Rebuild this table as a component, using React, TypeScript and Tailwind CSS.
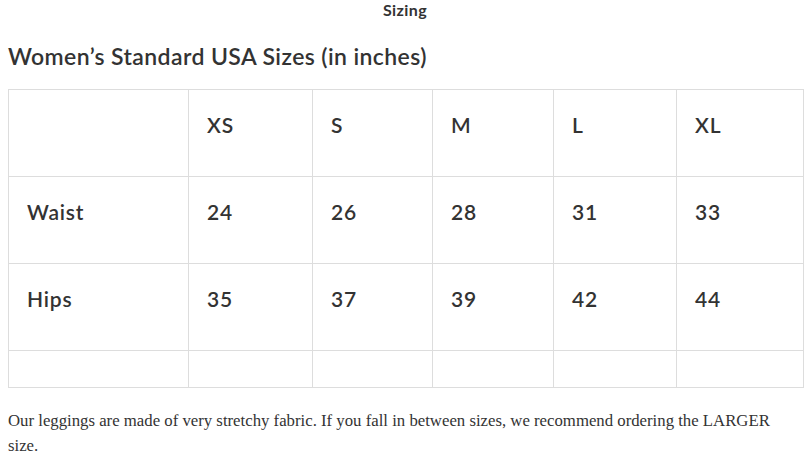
const sans = "font-['Lato','Open_Sans',sans-serif]";

const sizes = ["XS", "S", "M", "L", "XL"];
const rows: { label: string; values: string[] }[] = [
  { label: "Waist", values: ["24", "26", "28", "31", "33"] },
  { label: "Hips", values: ["35", "37", "39", "42", "44"] },
];
const widths = ["w-[180px]", "w-[124px]", "w-[120px]", "w-[121px]", "w-[123px]", "w-[127px]"];

function Cell({ children, i }: { children?: React.ReactNode; i: number }) {
  return (
    <td className={`${widths[i]} h-[87px] border border-[#dddddd] px-[18px] pb-[16px] align-middle text-[21px] font-semibold tracking-[0.8px] text-[#333333]`}>
      {children}
    </td>
  );
}

export default function App() {
  return (
    <div className="min-h-[464px] w-[810px] bg-white px-2 text-[#333333]">
      <div className={`${sans} text-center text-[16px] font-bold leading-[20px] tracking-[0.4px]`}>Sizing</div>
      <h1 className={`${sans} mt-[22px] text-[23px] font-semibold leading-[28px] tracking-[0.4px]`}>
        Women’s Standard USA Sizes (in inches)
      </h1>
      <table className={`${sans} mt-[19px] w-[795px] table-fixed border-collapse`}>
        <tbody>
          <tr>
            <Cell i={0} />
            {sizes.map((s, i) => (
              <Cell key={s} i={i + 1}>
                {s}
              </Cell>
            ))}
          </tr>
          {rows.map((r) => (
            <tr key={r.label}>
              <Cell i={0}>{r.label}</Cell>
              {r.values.map((v, i) => (
                <Cell key={i} i={i + 1}>
                  {v}
                </Cell>
              ))}
            </tr>
          ))}
          <tr>
            {widths.map((w, i) => (
              <td key={i} className={`${w} h-[37px] border border-[#dddddd]`} />
            ))}
          </tr>
        </tbody>
      </table>
      <p className="mt-[20px] font-['Liberation_Serif',serif] text-[16.75px] leading-[25px] text-[#333333]">
        Our leggings are made of very stretchy fabric. If you fall in between sizes, we recommend ordering the LARGER size.
      </p>
    </div>
  );
}
